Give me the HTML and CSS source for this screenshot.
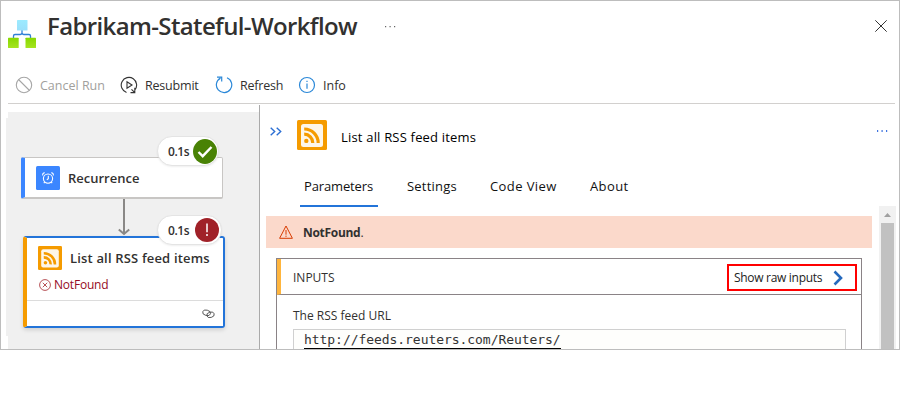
FILE: index.html
```html
<!DOCTYPE html>
<html lang="en">
<head>
<meta charset="utf-8">
<title>Fabrikam-Stateful-Workflow</title>
<link rel="stylesheet" href="styles.css">
</head>
<body>
<svg class="defs" width="0" height="0" aria-hidden="true">
  <symbol id="rss" viewBox="0 0 30 30">
    <rect width="30" height="30" rx="1.5" fill="#f59b00"/>
    <rect x="4" y="4" width="22" height="23" rx="2.5" fill="#fdf6ea"/>
    <circle cx="9.3" cy="20.9" r="2.2" fill="#f59b00"/>
    <path d="M7.2 14.2a8.6 8.6 0 0 1 8.6 8.800M7.2 9A13.9 13.9 0 0 1 21.200 23" fill="none" stroke="#f59b00" stroke-width="3.200"/>
  </symbol>
</svg>
<main class="window">
  <header class="header">
    <svg class="logo" width="28" height="28" viewBox="0 0 28 28">
      <defs><linearGradient id="g1" x2="0" y2="1"><stop stop-color="#9cebff"/><stop offset="1" stop-color="#9be0fb"/></linearGradient>
      <linearGradient id="g2" x2="0" y2="1"><stop stop-color="#86d800"/><stop offset="1" stop-color="#a6e420"/></linearGradient></defs>
      <path d="M14 10v3.5M5.5 18v-2q0-1.500 1.500-1.500h5q2 0 2-1.700q0 1.700 2 1.700h5q1.500 0 1.500 1.500v2" fill="none" stroke="#2f7fd6" stroke-width="1.300"/>
      <rect x="9" y="0" width="10.500" height="10.500" rx=".6" fill="url(#g1)"/>
      <rect x="0" y="17.700" width="10.700" height="10.300" rx=".6" fill="url(#g2)"/>
      <rect x="17.500" y="17.700" width="10.500" height="10.300" rx=".6" fill="url(#g2)"/>
    </svg>
    <h1>Fabrikam-Stateful-Workflow</h1>
    <svg class="more" width="13" height="3" viewBox="0 0 13 3" fill="#666"><path d="M1 1h1.200v1.200H1zM5.500 1h1.200v1.200H5.500zM10 1h1.200v1.200H10z"/></svg>
    <svg class="close" width="12" height="12" viewBox="0 0 12 12"><path d="M.3.3l11.400 11.400M11.700.3L.3 11.700" stroke="#333" stroke-width="1"/></svg>
  </header>
  <nav class="toolbar">
    <span class="cmd cancel"><svg width="18" height="18" viewBox="0 0 18 18" fill="none" stroke="#a6a6a6" stroke-width="1.100"><circle cx="9" cy="9" r="7.700"/><path d="M3.500 3.500l11 11"/></svg>Cancel Run</span>
    <span class="cmd resubmit"><svg width="18" height="18" viewBox="0 0 18 18" fill="none" stroke="#333" stroke-width="1.100"><path d="M6.500 16.400A7.700 7.700 0 1 1 14.600 14.300M14.800 11.800v4.800H10.500M14.600 16.400L11.500 13.300"/><path d="M7 5.800v6.400l5-3.200z"/></svg>Resubmit</span>
    <span class="cmd refresh"><svg width="18" height="18" viewBox="0 0 18 18" fill="none" stroke="#2b88d8" stroke-width="1.200"><path d="M12 1.800A7.700 7.700 0 1 1 5.500 2.100M2 1.100h4.700v4.500"/></svg>Refresh</span>
    <span class="cmd info"><svg width="18" height="18" viewBox="0 0 18 18" fill="none" stroke="#2b88d8" stroke-width="1.200"><circle cx="9" cy="9" r="7.500"/><path d="M9 7.400v5.300M9 4.800v1.300"/></svg>Info</span>
  </nav>
  <div class="body">
    <section class="canvas">
      <article class="node recurrence">
        <svg width="24" height="24" viewBox="0 0 24 24"><rect width="24" height="24" rx="1.500" fill="#3b86ff"/><g fill="none" stroke="#fff" stroke-width="1.100"><circle cx="12" cy="12.600" r="4.600"/><path d="M12.300 9.800v3l-1.500 1M6.800 9.500q-.6-2.500 2-2.700M17.200 9.500q.6-2.500-2-2.700M8.800 16l-1 1.200M15.200 16l1 1.200"/></g></svg>
        <b>Recurrence</b>
        <span class="pill">0.1s<svg width="24" height="25" viewBox="0 0 24 25"><ellipse cx="12" cy="12.500" rx="12" ry="12.500" fill="#498205"/><path d="M5.500 13l4.200 4.200L18.500 8" fill="none" stroke="#fff" stroke-width="2.400"/></svg></span>
      </article>
      <svg class="arrow" width="12" height="37" viewBox="0 0 12 37" fill="none" stroke="#8a8886" stroke-width="2"><path d="M6 0v35M.8 30.500L6 35l5.200-4.500"/></svg>
      <article class="node feed">
        <div class="title"><svg width="24" height="24"><use href="#rss"/></svg><b>List all RSS feed items</b></div>
        <div class="error"><svg width="12" height="12" viewBox="0 0 12 12" fill="none" stroke="#a4262c" stroke-width=".8"><circle cx="6" cy="6" r="5.400"/><path d="M3.800 3.800l4.400 4.400M8.200 3.800L3.800 8.200"/></svg><span>NotFound</span></div>
        <div class="foot"><svg width="13" height="10" viewBox="0 0 13 10" fill="none" stroke="#555" stroke-width=".9"><ellipse cx="4.600" cy="3.800" rx="4" ry="2.700" transform="rotate(15 4.600 3.800)"/><ellipse cx="8.500" cy="5.800" rx="3.800" ry="2.700" transform="rotate(-15 8.500 5.800)"/></svg></div>
        <span class="pill">0.1s<svg width="24" height="24" viewBox="0 0 24 24"><circle cx="12" cy="12" r="12" fill="#a02128"/><path d="M12 5.500v8.700M12 16v2" stroke="#fff" stroke-width="1.500"/></svg></span>
      </article>
    </section>
    <section class="details">
      <div class="heading">
        <svg class="collapse" width="12" height="9" viewBox="0 0 12 9" fill="none" stroke="#2b6fd4" stroke-width="1.400"><path d="M.7.700l4 3.800-4 3.800M6.700.700l4 3.800-4 3.800"/></svg>
        <svg class="rss" width="30" height="30"><use href="#rss"/></svg>
        <h2>List all RSS feed items</h2>
        <svg class="more" width="12" height="3" viewBox="0 0 12 3" fill="#3f74e0"><path d="M1 0h1.200v2H1zM5.500 0h1.200v2H5.500zM10 0h1.200v2H10z"/></svg>
      </div>
      <nav class="tabs"><span class="tab active">Parameters</span><span class="tab settings">Settings</span><span class="tab code">Code View</span><span class="tab about">About</span></nav>
      <div class="scroller">
        <div class="content">
          <div class="banner"><svg width="14" height="14" viewBox="0 0 14 14" fill="none" stroke="#d83b01" stroke-width="1"><path d="M7 1L13.400 13.300H.6zM7 5v4.700M7 10.600v1.300"/></svg><p><b>NotFound</b>.</p></div>
          <div class="panel">
            <div class="panel-head"><span class="inputs">INPUTS</span>
              <span class="raw">Show raw inputs<svg width="10" height="16" viewBox="0 0 10 16"><path d="M1.500 1.500L8 8l-6.500 6.500" fill="none" stroke="#2569bd" stroke-width="2.600"/></svg></span></div>
            <div class="panel-body"><label>The RSS feed URL</label><div class="field"><span>http://feeds.reuters.com/Reuters/</span></div></div>
          </div>
        </div>
        <div class="scrollbar"><svg width="7" height="4" viewBox="0 0 7 4"><path d="M3.500 0L7 4H0z" fill="#a0a0a0"/></svg><i></i></div>
      </div>
    </section>
  </div>
</main>
</body>
</html>
```
FILE: styles.css
```css
* { box-sizing: border-box; }
body { margin: 0; background: #fff; color: #323130; font-family: "Open Sans", "Noto Sans", sans-serif; }
h1, h2, p { margin: 0; }
svg { display: block; flex: none; }
b { font-weight: 600; }
.defs { position: absolute; }
.window { width: 900px; height: 350px; border: 1px solid #bdbdbd; overflow: hidden; display: flex; flex-direction: column; }

.header { height: 64px; padding: 0 12px 0 7px; display: flex; align-items: flex-start; }
.logo { margin-top: 19px; }
h1 { margin-left: 11px; padding-top: 8px; width: 337px; font-size: 24px; line-height: 34px; font-weight: 600; letter-spacing: -.63px; white-space: nowrap; }
.header .more { margin-top: 24px; }
.close { margin: 19px 0 0 auto; }

.toolbar { height: 39px; margin: 0 4px 0 7px; padding-left: 7px; border-bottom: 1px solid #d2d0ce; display: flex; align-items: flex-start; }
.cmd { display: flex; align-items: center; height: 40px; gap: 7px; font-size: 12.5px; white-space: nowrap; }
.cancel { width: 105px; color: #a19f9d; }
.resubmit { width: 95px; letter-spacing: -.2px; }
.refresh { width: 83px; letter-spacing: -.2px; }

.body { flex: 1; display: grid; grid-template-columns: 258px 1fr; min-height: 0; }
.canvas { margin: 8px 0 0 5px; padding: 45px 0 0 15px; background: #f0f0f0; clip-path: polygon(2px 0, 100% 0, 100% 100%, 2px 100%, 2px 224px, 0 224px, 0 6px, 2px 6px); }
.node { position: relative; background: #fff; }
.node b { font-size: 13px; white-space: nowrap; }
.recurrence { width: 202px; height: 42px; padding-left: 11px; display: flex; align-items: center; gap: 8px; border: solid #c8c6c4; border-width: 1px 1px 2px 0; border-left: 4px solid #3b86ff; border-radius: 2px; }
.arrow { margin-left: 97px; }
.feed { width: 202px; height: 92px; margin-left: 2px; border: 2px solid #2374d9; border-left: 4px solid #f59b00; border-radius: 3px; box-shadow: 0 2px 4px #0002; }
.title { display: flex; align-items: center; gap: 8px; height: 40px; padding-left: 11px; letter-spacing: .17px; }
.error { display: flex; align-items: center; gap: 3px; height: 17px; margin-top: -2px; padding-left: 12px; color: #960b24; font-size: 12px; letter-spacing: -.2px; }
.foot { height: 27px; margin-top: 7px; border-top: 1px solid #dcdcdc; display: flex; justify-content: flex-end; align-items: center; padding-right: 8px; }
.pill { position: absolute; left: 132px; top: -22px; width: 62px; height: 30px; padding: 0 1px 0 10px; border: 1px solid #e4e4e4; border-radius: 15px; background: #fff; display: flex; align-items: center; justify-content: space-between; font-size: 12px; font-weight: 600; letter-spacing: -.4px; box-shadow: 0 1px 2px #0001; }
.feed .pill { left: 130px; top: -23px; width: 65px; padding-right: 2px; }

.details { border-left: 1px solid #aaa; margin-top: 1px; min-width: 0; display: flex; flex-direction: column; }
.heading { height: 60px; padding-left: 10px; display: flex; align-items: flex-start; }
.collapse { margin-top: 22px; }
.rss { margin: 15px 0 0 15px; }
h2 { margin: 22px 0 0 14px; color: #000; font-size: 13px; line-height: 20px; font-weight: 400; letter-spacing: .19px; }
.heading .more { margin: 25px 11px 0 auto; }
.tabs { height: 41px; display: flex; padding-left: 40px; color: #111; font-size: 13px; }
.tab { height: 42px; line-height: 42px; white-space: nowrap; }
.active { width: 78px; padding-left: 4px; margin-right: 29px; letter-spacing: -.14px; border-bottom: 2px solid #2374d9; }
.settings { width: 83px; letter-spacing: .22px; }
.code { width: 100px; letter-spacing: .4px; }
.about { letter-spacing: .4px; }
.scroller { flex: 1; min-height: 0; display: flex; overflow: hidden; justify-content: space-between; padding-right: 3px; }
.content { width: 612px; padding: 10px 0 0 6px; }
.banner { height: 32px; background: #fbd9cb; display: flex; align-items: center; gap: 10px; padding-left: 13px; font-size: 12px; letter-spacing: -.3px; }
.banner b { font-weight: 700; }
.panel { width: 586px; height: 130px; margin: 10px 0 0 10px; border: 1px solid #8a8386; }
.panel-head { height: 36px; border-left: 4px solid #ffb53d; border-bottom: 1px solid #8a8386; display: flex; align-items: center; justify-content: space-between; padding: 0 4px 0 12px; font-size: 12px; }
.inputs { padding-top: 2px; }
.raw { width: 130px; height: 27px; margin-top: 2px; border: 2px solid #f00; display: flex; align-items: center; justify-content: space-between; padding: 0 12px 0 5px; color: #222; letter-spacing: -.3px; white-space: nowrap; }
.panel-body { padding: 11px 15px 0 16px; font-size: 12px; }
label { display: block; line-height: 20px; }
.field { height: 21px; margin-top: 3px; border: 1px solid #d0d0d0; border-bottom-color: #bbb; padding-left: 10px; background: #fefefc; }
.field span { display: block; width: 257px; height: 19px; line-height: 19px; border-bottom: 1px solid #000; font-family: "DejaVu Sans Mono", monospace; font-size: 13px; letter-spacing: -.05px; color: #333; }
.scrollbar { width: 17px; background: #f1f1f1; display: flex; flex-direction: column; align-items: center; padding-top: 7px; }
.scrollbar i { width: 13px; flex: 1; margin-top: 6px; background: #c1c1c1; }
```
